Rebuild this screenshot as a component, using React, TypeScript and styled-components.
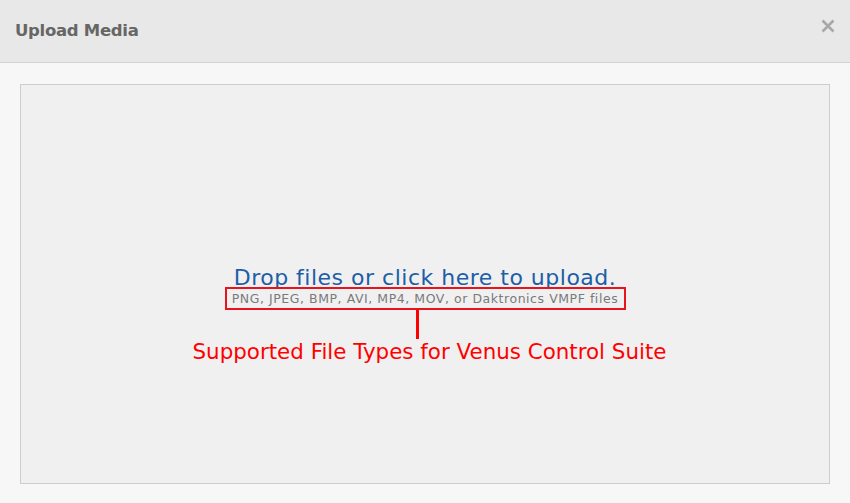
import React from "react";
import styled, { createGlobalStyle } from "styled-components";

const Global = createGlobalStyle`
  html, body { margin: 0; padding: 0; background: #f7f7f7; }
  body { font-family: "DejaVu Sans", Verdana, sans-serif; }
`;

const Modal = styled.div`
  width: 850px;
  height: 503px;
  display: flex;
  flex-direction: column;
  background: #f7f7f7;
`;

const Header = styled.div`
  height: 63px;
  box-sizing: border-box;
  display: flex;
  align-items: center;
  justify-content: space-between;
  padding: 0 15px 0 15px;
  background: #e8e8e8;
  border-bottom: 1px solid #d2d2d2;
`;

const Title = styled.h1`
  margin: -2px 0 0 0;
  font-family: "DejaVu Sans", sans-serif;
  font-size: 16.5px;
  font-weight: bold;
  color: #666666;
  letter-spacing: -0.3px;
`;

const Close = styled.button`
  border: none;
  background: none;
  padding: 0;
  margin-top: -10px;
  width: 14px;
  height: 14px;
  cursor: pointer;
  display: flex;
  align-items: center;
  justify-content: center;
`;

const Body = styled.div`
  flex: 1;
  padding: 21px 20px 19px 20px;
  display: flex;
`;

const DropZone = styled.div`
  flex: 1;
  box-sizing: border-box;
  border: 1px solid #cdcdcd;
  background: #f0f0f0;
  display: flex;
  flex-direction: column;
  align-items: center;
  justify-content: center;
  padding-top: 63px;
  cursor: pointer;
`;

const DropText = styled.div`
  font-family: "DejaVu Sans", sans-serif;
  font-size: 22px;
  letter-spacing: 0.5px;
  color: #1c5ea7;
  line-height: 21px;
  white-space: nowrap;
`;

const Types = styled.div`
  margin-top: -1px;
  box-sizing: border-box;
  width: 401px;
  height: 23px;
  padding: 2px 0;
  text-align: center;
  border: 2px solid #e8141c;
  font-family: "DejaVu Sans", sans-serif;
  font-size: 12.5px;
  letter-spacing: 0.55px;
  color: #7a7a7a;
  line-height: 15px;
  white-space: nowrap;
`;

const Pointer = styled.div`
  width: 3px;
  height: 29px;
  background: #ff0000;
  margin-right: 15px;
`;

const Annotation = styled.div`
  font-family: "DejaVu Sans", Verdana, sans-serif;
  font-size: 21.4px;
  color: #ff0000;
  line-height: 25px;
  margin-left: 9px;
  white-space: nowrap;
`;

export default function App() {
  return (
    <>
      <Global />
      <Modal>
        <Header>
          <Title>Upload Media</Title>
          <Close aria-label="Close">
            <svg width="14" height="14" viewBox="0 0 14 14">
              <path d="M1.5 1.5 L12.5 12.5 M12.5 1.5 L1.5 12.5" stroke="#a8a8a8" strokeWidth="2.6" />
            </svg>
          </Close>
        </Header>
        <Body>
          <DropZone>
            <DropText>Drop files or click here to upload.</DropText>
            <Types>PNG, JPEG, BMP, AVI, MP4, MOV, or Daktronics VMPF files</Types>
            <Pointer />
            <Annotation>Supported File Types for Venus Control Suite</Annotation>
          </DropZone>
        </Body>
      </Modal>
    </>
  );
}
